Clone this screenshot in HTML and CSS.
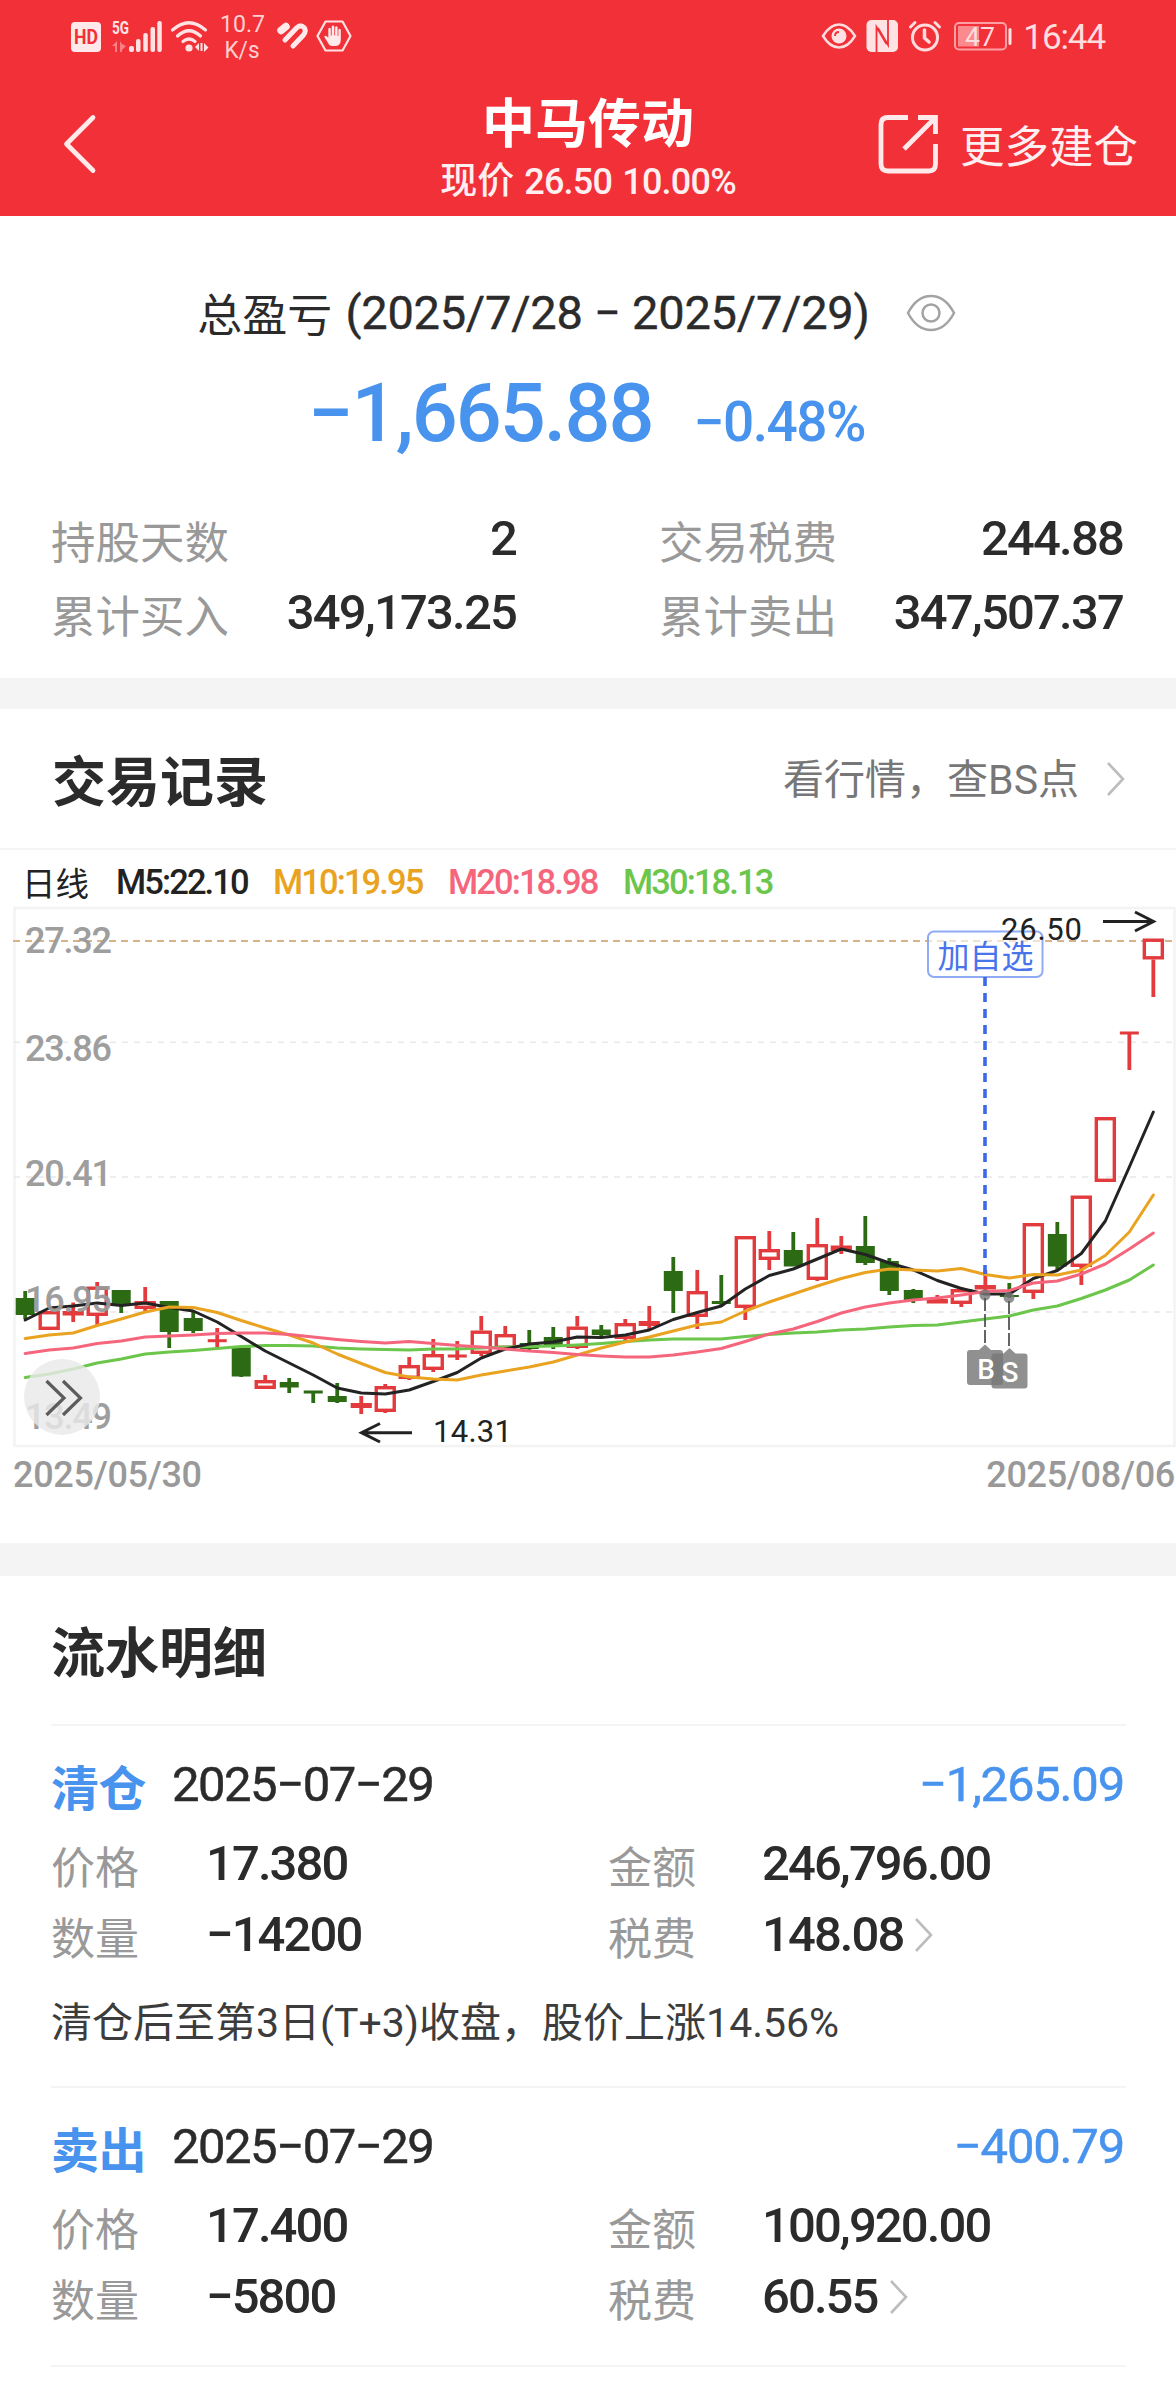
FILE: index.html
```html
<!DOCTYPE html>
<html lang="zh-CN">
<head>
<meta charset="utf-8">
<title>中马传动</title>
<link rel="stylesheet" href="styles.css">
</head>
<body>
<div class="page">
  <header class="top">
    <div class="status">
      <div class="status-left">
        <svg class="sig" width="282" height="60" viewBox="70 4 282 60">
          <rect x="71" y="22" width="30" height="30" rx="4" fill="#ffe9ea"/>
          <text x="74" y="44" font-size="20" font-weight="700" fill="#f23038" textLength="24" lengthAdjust="spacingAndGlyphs">HD</text>
          <g fill="#ffe3e4">
            <text x="112" y="34" font-size="18" font-weight="700" textLength="17" lengthAdjust="spacingAndGlyphs">5G</text>
            <path opacity=".45" d="M117 41v11h-2v-6h-3zM120 41v11h2v-2l4-4-4-2z"/>
            <rect x="129" y="46" width="5" height="6" rx="2"/>
            <rect x="136" y="39" width="4.500" height="13" rx="2"/>
            <rect x="143.300" y="33" width="4.500" height="19" rx="2"/>
            <rect x="150.500" y="27" width="4.500" height="25" rx="2"/>
            <rect x="157.300" y="21" width="4.500" height="31" rx="2"/>
            <circle cx="189" cy="48" r="3.600"/>
            <path d="M195 47l4-4v8zM200.500 43h2v8h-2zM204 43l4.500 4.500-4.500 4.500z"/>
          </g>
          <g fill="none" stroke="#ffe3e4" stroke-width="3.200" stroke-linecap="round">
            <path d="M172.500 30Q189 15.500 205.500 30M177.500 36Q189 25.500 200.500 36M183 41.500Q189 36.500 195 41.500"/>
            <path d="M325.500 21.500h17l8 14.500-8 14.500h-17l-8-14.500z" stroke-width="2.200" stroke-linejoin="round"/>
          </g>
          <g font-size="24" fill="#ffd0d2">
            <text x="220" y="32" textLength="45" lengthAdjust="spacingAndGlyphs">10.7</text>
            <text x="224.500" y="58" font-size="23" textLength="35" lengthAdjust="spacingAndGlyphs">K/s</text>
          </g>
          <g fill="none" stroke="#ffe9ea" stroke-linecap="round">
            <path d="M281 30.500L286 26.500" stroke-width="7.500"/>
            <path d="M285 40L296.500 28Q300.500 24 304 27.500Q307 31 303 35.500L293 46" stroke-width="5"/>
          </g>
          <path fill="#ffe9ea" d="M328.300 28.500q1.400-1.600 2.500 0v7h.9v-9q1.300-1.800 2.600 0v9h.8v-8.500q1.300-1.600 2.500 0v9h.8v-6.500q1.300-1.600 2.400 0v10q0 6.500-5 6.500h-3.500q-3 0-4.500-3.500l-3.500-5.500q.5-2 2.500-.8l1.500 1.500z"/>
        </svg>
      </div>
      <div class="status-right">
        <svg width="192" height="34" viewBox="821 19 192 34">
          <g fill="none" stroke="#ffdcde" stroke-width="2.500">
            <path d="M823 36Q830 24.500 839 24.500T855 36Q848 47.500 839 47.500T823 36z"/>
            <circle cx="925" cy="37.500" r="12.500" stroke-width="3"/>
            <path d="M924.500 30v8l4.500 4" stroke-width="3.500" stroke-linecap="round"/>
            <path d="M910.500 27l4.500-4.500M939.500 27l-4.500-4.500" stroke-width="3" stroke-linecap="round"/>
            <rect x="955" y="23" width="51" height="26.500" rx="4" stroke="#ff9fa3" stroke-width="2"/>
          </g>
          <circle cx="839" cy="36" r="7.500" fill="#ffe3e4"/>
          <path d="M835 36q0-4 4-4" fill="none" stroke="#f23038" stroke-width="1.800"/>
          <rect x="866.500" y="20" width="31.500" height="32" rx="5" fill="#ffe3e4"/>
          <path d="M876.500 53V27l10 17M888 19v26l-10-17" fill="none" stroke="#f23038" stroke-width="1.800"/>
          <rect x="958" y="26" width="21" height="20.500" fill="#fb8a8e"/>
          <rect x="1008.500" y="28" width="3" height="17" rx="1.500" fill="#ffe3e4"/>
          <text x="965" y="45.500" font-size="26" fill="#ffdcde" textLength="30" lengthAdjust="spacingAndGlyphs">47</text>
        </svg>
        <span class="clock">16:44</span>
      </div>
    </div>
    <div class="nav">
      <svg class="back" width="36" height="62" viewBox="61 113 36 62"><path d="M93 117.500L66.500 144L93 170.500" fill="none" stroke="#ffe9ea" stroke-width="4.800" stroke-linecap="round" stroke-linejoin="round"/></svg>
      <div class="stock">
        <h1>中马传动</h1>
        <p><span class="cn">现价</span> 26.50 10.00%</p>
      </div>
      <div class="more">
        <svg width="62" height="62" viewBox="877 113 62 62"><path d="M907 117.500H887q-7 0-7 7V164q0 7 7 7h41q6.500 0 6.500-7V144M917 117.500h17.500V134M934 118L903 149" fill="none" stroke="#ffe9ea" stroke-width="4.800"/></svg>
        <span>更多建仓</span>
      </div>
    </div>
  </header>

  <section class="summary">
    <div class="period">
      <span class="cn">总盈亏</span>
      <span class="range">(2025/7/28 − 2025/7/29)</span>
      <svg width="50" height="38" viewBox="0 0 50 38"><g fill="none" stroke="#a3a3a3" stroke-width="2.500"><path d="M2 19Q11 2 25 2T48 19Q39 36 25 36T2 19z"/><ellipse cx="25" cy="19" rx="8.500" ry="8.500"/></g></svg>
    </div>
    <div class="profit"><span class="amount">−1,665.88</span><span class="rate">−0.48%</span></div>
    <dl class="stats">
      <div><dt>持股天数</dt><dd>2</dd></div>
      <div><dt>交易税费</dt><dd>244.88</dd></div>
      <div><dt>累计买入</dt><dd>349,173.25</dd></div>
      <div><dt>累计卖出</dt><dd>347,507.37</dd></div>
    </dl>
  </section>

  <section class="records">
    <div class="records-head">
      <h2>交易记录</h2>
      <div class="link"><span>看行情，查BS点</span><svg width="22" height="38" viewBox="0 0 22 38"><path d="M3 3L18 19L3 35" fill="none" stroke="#bdbdbd" stroke-width="2.600"/></svg></div>
    </div>
    <div class="legend">
      <span class="cn">日线</span><span class="m5">M5:22.10</span><span class="m10">M10:19.95</span><span class="m20">M20:18.98</span><span class="m30">M30:18.13</span>
    </div>
    <svg class="chart" id="chart" width="1176" height="545" viewBox="0 905 1176 545">
      <rect x="14.500" y="908" width="1160" height="538" fill="none" stroke="#f3f3f3" stroke-width="2.500"/>
      <g fill="none" stroke="#e9e9e9" stroke-width="1.500" stroke-dasharray="6 6">
        <path d="M14 1042.300H1175M14 1177H1175M14 1312H1175"/>
      </g>
      <path d="M13 941H1175" stroke="#d9b48a" stroke-width="1.800" stroke-dasharray="7 5"/>
      <g id="candles"></g>
      <g id="averages" fill="none" stroke-width="3" stroke-linejoin="round" stroke-linecap="round"></g>
      <g class="axis">
        <text x="25" y="952.500" textLength="87">27.32</text>
        <text x="25" y="1060.500" textLength="87">23.86</text>
        <text x="25" y="1185.500" textLength="87">20.41</text>
        <text x="25" y="1311.700" textLength="87">16.95</text>
        <text x="25" y="1429" textLength="87">13.49</text>
      </g>
      <circle cx="62" cy="1397" r="38" fill="#e9e9e9" fill-opacity=".82"/>
      <path d="M46.500 1381L64 1398L46.500 1415M63 1381L80.500 1398L63 1415" fill="none" stroke="#5c5c5c" stroke-width="3.200"/>
      <rect x="928" y="931.500" width="114.500" height="45.500" rx="6" fill="#fff" fill-opacity=".6" stroke="#8fabf5" stroke-width="2"/>
      <text class="pick" x="937.500" y="968">加自选</text>
      <path d="M985 977V1275" stroke="#3c69ea" stroke-width="3.600" stroke-dasharray="9 7" fill="none"/>
      <g fill="none" stroke="#222" stroke-width="3">
        <path d="M1103 921.500H1153M1135 912L1153.500 921.500L1135 931"/>
        <path d="M412 1432.700H362M380 1423.500L361.500 1432.700L380 1442"/>
      </g>
      <g class="extreme">
        <text x="1001" y="940" textLength="81">26.50</text>
        <text x="433" y="1442" textLength="79">14.31</text>
      </g>
      <g fill="#777" fill-opacity=".8"><circle cx="985" cy="1295" r="5.500"/><circle cx="1009" cy="1297.500" r="5.500"/></g>
      <path d="M985 1298V1345M1009 1301V1348" stroke="#555" stroke-width="1.800" stroke-dasharray="13 3"/>
      <g fill="#777" fill-opacity=".82">
        <path d="M970 1350h9l6-5.500 6 5.500h9q3 0 3 3v29q0 3-3 3h-30q-3 0-3-3v-29q0-3 3-3z"/>
        <path d="M994.500 1353.500h9l6-5.500 6 5.500h9q3 0 3 3v29q0 3-3 3h-30q-3 0-3-3v-29q0-3 3-3z"/>
      </g>
      <g class="mark"><text x="986" y="1379">B</text><text x="1010" y="1382">S</text></g>
    </svg>
    <div class="dates"><span>2025/05/30</span><span>2025/08/06</span></div>
  </section>

  <section class="ledger">
    <h2>流水明细</h2>
    <article class="entry">
      <div class="entry-head"><b>清仓</b><time>2025−07−29</time><span>−1,265.09</span></div>
      <div class="grid">
        <label>价格</label><div>17.380</div><label>金额</label><div>246,796.00</div>
        <label>数量</label><div>−14200</div><label>税费</label><div>148.08<svg width="22" height="38" viewBox="0 0 22 38"><path d="M3 3L18 19L3 35" fill="none" stroke="#bdbdbd" stroke-width="2.600"/></svg></div>
      </div>
      <p>清仓后至第3日(T+3)收盘，股价上涨14.56%</p>
    </article>
    <article class="entry">
      <div class="entry-head"><b>卖出</b><time>2025−07−29</time><span>−400.79</span></div>
      <div class="grid">
        <label>价格</label><div>17.400</div><label>金额</label><div>100,920.00</div>
        <label>数量</label><div>−5800</div><label>税费</label><div>60.55<svg width="22" height="38" viewBox="0 0 22 38"><path d="M3 3L18 19L3 35" fill="none" stroke="#bdbdbd" stroke-width="2.600"/></svg></div>
      </div>
    </article>
  </section>
</div>
<script src="chart.js"></script>
</body>
</html>
```
FILE: styles.css
```css
* { box-sizing: border-box; margin: 0; padding: 0; }
body { background: #fff; color: #2b2b2b; font-family: Roboto, "Noto Sans CJK SC", sans-serif; }
.page { width: 1176px; height: 2400px; overflow: hidden; background: #fff; }
svg { display: block; flex: none; }
.cn { font-family: "Noto Sans CJK SC", sans-serif; }

.top { height: 216px; background: #f23038; color: #fff; }
.status { height: 72px; display: flex; justify-content: space-between; padding: 0 71px 0 70px; }
.status-left { padding-top: 4px; }
.status-right { display: flex; gap: 10px; padding-top: 19px; }
.clock { font-size: 35px; line-height: 37px; letter-spacing: -1.1px; color: #ffdcde; }
.nav { height: 144px; display: grid; grid-template-columns: 1fr auto 1fr; padding: 0 38px 0 61px; }
.back { margin-top: 41px; }
.stock { text-align: center; margin-right: 23px; }
.stock h1 { font: 700 53px/70px "Noto Sans CJK SC", sans-serif; margin-top: 13px; }
.stock p { font-size: 36px; font-weight: 500; line-height: 50px; margin-top: 2px; letter-spacing: -.8px; word-spacing: 2px; color: #ffeff0; white-space: nowrap; }
.stock p .cn { letter-spacing: 0; line-height: 40px; font-size: 37px; }
.more { display: flex; justify-content: flex-end; gap: 20px; margin-top: 41px; height: 62px; }
.more span { font: 400 44.500px/62px "Noto Sans CJK SC", sans-serif; color: #ffeff0; }

.summary { height: 462px; padding: 67px 52px 0; }
.period { height: 60px; display: flex; justify-content: center; align-items: center; line-height: 60px; font-size: 45px; padding-right: 23px; }
.range { font-size: 47px; letter-spacing: -.25px; margin: 0 36px 0 13px; -webkit-text-stroke: .4px; }
.profit { display: flex; justify-content: center; align-items: baseline; gap: 41px; margin-top: 26px; height: 90px; line-height: 90px; color: #4893ee; font-weight: 500; padding-right: 3px; }
.amount { font-size: 81px; letter-spacing: -2px; }
.rate { font-size: 55px; letter-spacing: -1.500px; }
.stats { display: grid; grid-template-columns: 465px 464px; column-gap: 143px; margin: 42px 0 0 -1px; width: 1073px; }
.stats div { height: 74px; display: flex; justify-content: space-between; line-height: 76px; }
dt { font: 400 44.500px/78px "Noto Sans CJK SC", sans-serif; color: #999; }
dd { font-size: 49px; font-weight: 500; letter-spacing: -1.800px; }

.records { border-top: 31px solid #f4f4f4; }
.records-head { height: 141px; border-bottom: 2px solid #f5f5f5; display: flex; justify-content: space-between; align-items: center; padding: 0 49px 0 52px; }
h2 { font: 700 54px/80px "Noto Sans CJK SC", sans-serif; color: #2b2b2b; }
.link { display: flex; align-items: center; gap: 26px; font: 400 41px/60px Roboto, "Noto Sans CJK SC", sans-serif; color: #777; }
.link span { padding-top: 3px; }
.legend { height: 55px; padding: 8px 0 0 22px; display: flex; line-height: 49px; font-size: 34.500px; font-weight: 500; letter-spacing: -1.900px; color: #222; }
.legend .cn { font-size: 33.500px; font-weight: 400; letter-spacing: 0; width: 94px; line-height: 47px; }
.m5 { width: 157px; }
.m10, .m20 { width: 175px; }
.m10 { color: #e9a320; }
.m20 { color: #f5667d; }
.m30 { color: #6bc64b; }
.axis { font-size: 36px; font-weight: 500; fill: #999; opacity: .95; }
.pick { font: 400 32px "Noto Sans CJK SC", sans-serif; fill: #4a74ec; }
.extreme { font-size: 31px; fill: #222; }
.mark { font-size: 28px; font-weight: 500; fill: #fff; text-anchor: middle; }
.dates { height: 93px; display: flex; justify-content: space-between; padding: 1px 1px 0 13px; font-size: 36px; font-weight: 500; letter-spacing: -.3px; line-height: 48px; color: #999; }

.ledger { border-top: 33px solid #f4f4f4; padding: 0 50px 0 51px; }
.ledger h2 { height: 148px; line-height: 148px; }
.entry { border-top: 2px solid #f4f4f4; padding: 24px 2px 33px 0; }
.entry + .entry { border-bottom: 2px solid #f4f4f4; }
.entry-head { display: flex; height: 70px; line-height: 70px; font-size: 49px; letter-spacing: -1.500px; -webkit-text-stroke: .5px; }
.entry-head b { font: 700 48px/70px "Noto Sans CJK SC", sans-serif; letter-spacing: -.5px; color: #4893ee; width: 121px; -webkit-text-stroke: 0; }
.entry-head span { margin-left: auto; color: #4893ee; letter-spacing: -1.200px; }
.grid { display: grid; grid-template-columns: 155px 402px 154px 1fr; margin-top: 8px; }
.grid label { font: 400 44px/75px "Noto Sans CJK SC", sans-serif; color: #999; height: 71px; }
.grid div { display: flex; align-items: center; gap: 10px; height: 71px; line-height: 71px; font-size: 49px; font-weight: 500; letter-spacing: -1.900px; }
.entry p { margin-top: 23px; font-size: 41px; line-height: 60px; color: #3c3c3c; }
```
FILE: chart.js
```js
// Each candle: [direction, body top, body bottom, wick top, wick bottom]
const candles = [
  ['d',1298,1315,1291,1319],['u',1311,1330,1311,1330],['u',1311,1315.5,1302.5,1322],['u',1286.5,1316,1282,1325],
  ['d',1290,1305,1290,1313],['u',1301,1309,1287,1312],['d',1301,1332,1301,1348],['d',1318,1331,1312,1333],
  ['u',1339.2,1342.2,1328,1347],['d',1347.5,1376.5,1347,1377],['u',1380,1389,1375,1389],['d',1382,1387.5,1378,1393],
  ['d',1390.5,1393.5,1391,1403],['d',1396,1402,1383,1403],['u',1403,1408,1396,1414],['u',1386,1412,1384,1413],
  ['u',1365,1379,1357,1380],['u',1354,1370,1339,1372],['u',1354.5,1357.5,1341,1360],['u',1330.5,1354,1316,1356],
  ['u',1334,1349,1326,1349],['d',1343,1349,1330,1350],['d',1337,1345,1327,1349],['u',1326.5,1348,1316,1349],
  ['d',1329.5,1335,1325,1338],['u',1323,1339,1319,1341],['u',1321,1326,1306,1330],['d',1271,1291,1257,1313],
  ['u',1291,1317,1270,1329],['d',1301,1304,1275,1305],['u',1236,1308,1237,1320],['u',1249,1260,1231,1270],
  ['d',1250,1266.5,1232,1266],['u',1244,1280,1218,1281],['u',1245.5,1251,1236,1254],['d',1246,1263,1216,1265],
  ['d',1261,1291,1258,1295],['d',1290,1300,1289,1303],['u',1299,1303.5,1295,1303],['u',1289,1304,1287,1307],
  ['u',1285,1289.5,1270,1292],['d',1295,1297,1283,1298],['u',1223,1293,1223,1299],['d',1234,1266.5,1222,1270],
  ['u',1195.5,1267,1196,1285],['u',1117,1182,1118,1181],['u',1031.5,1034.5,1032,1070],['u',938.5,959.5,939,997]
];
const averages = {
  '#6bc64b': [1377.5,1374,1369,1363,1359,1354,1352,1350.5,1348.5,1346.5,1345.5,1345.5,1346,1348,1349,1349.5,1350,1349,1349,1348,1347,1346.5,1346,1345,1343.5,1341.5,1340,1339,1339,1339,1336.5,1334.5,1333,1332,1330,1329,1327,1325.5,1325,1322,1319,1316,1310,1306,1298.5,1290,1280,1265],
  '#232323': [1320,1308,1306,1303,1305.5,1303,1307.5,1311,1322,1336.5,1351,1363,1375,1388,1393,1394,1390,1381.5,1372.5,1358,1349,1344,1342,1337,1337.5,1335,1330,1319.5,1312.5,1306,1289,1275.5,1269,1259,1249,1254.5,1263,1270,1280.5,1288.5,1294,1294,1278.5,1270.5,1253.5,1221,1167,1112],
  '#e9a320': [1338.5,1335,1333,1325.5,1319,1312,1307,1307.5,1312.5,1320.5,1328,1335,1343,1354,1363.5,1372.5,1377,1379,1380,1375,1371,1367,1362,1355,1348,1342,1337,1331,1325,1322,1311,1302,1294,1286,1278.5,1272.5,1269,1270,1271,1268.5,1274.5,1278,1274.5,1275,1270,1255.5,1232,1195],
  '#f5667d': [1353.5,1350,1348,1343.5,1341,1337,1336,1335,1333.5,1333,1333,1334.5,1337,1339.5,1341.5,1343,1341.5,1343.5,1345.5,1347,1349,1351,1352.5,1354.5,1356,1357,1357,1355,1352,1348.5,1341.5,1334,1329,1321.5,1313,1307,1303,1300,1298,1295,1291.5,1290.5,1283,1281,1274,1264,1249,1233]
};
const NS = 'http://www.w3.org/2000/svg';
const x = i => 25.2 + i * 24.003;

function add(parent, tag, attrs) {
  const el = document.createElementNS(NS, tag);
  for (const k in attrs) el.setAttribute(k, attrs[k]);
  parent.appendChild(el);
}

const layer = document.getElementById('candles');
candles.forEach(([dir, top, bottom, high, low], i) => {
  const cx = x(i), up = dir === 'u', color = up ? '#e23a3d' : '#2d6a14';
  const wick = (a, b) => { if (b > a) add(layer, 'path', { d: `M${cx} ${a}V${b}`, stroke: color, 'stroke-width': 3.8 }); };
  const h = bottom - top;
  if (up && h > 6) {
    wick(high, top);
    wick(bottom, low);
    add(layer, 'rect', { x: cx - 9, y: top + 1.7, width: 18, height: h - 3.4, fill: 'none', stroke: color, 'stroke-width': 3.4 });
  } else {
    wick(high, low);
    add(layer, 'rect', { x: cx - (up && h > 3.5 ? 10.6 : 9.5), y: top, width: up && h > 3.5 ? 21.2 : 19, height: h, fill: color });
  }
});

const lines = document.getElementById('averages');
for (const color in averages) {
  add(lines, 'polyline', { points: averages[color].map((y, i) => `${x(i)},${y}`).join(' '), stroke: color });
}
```
